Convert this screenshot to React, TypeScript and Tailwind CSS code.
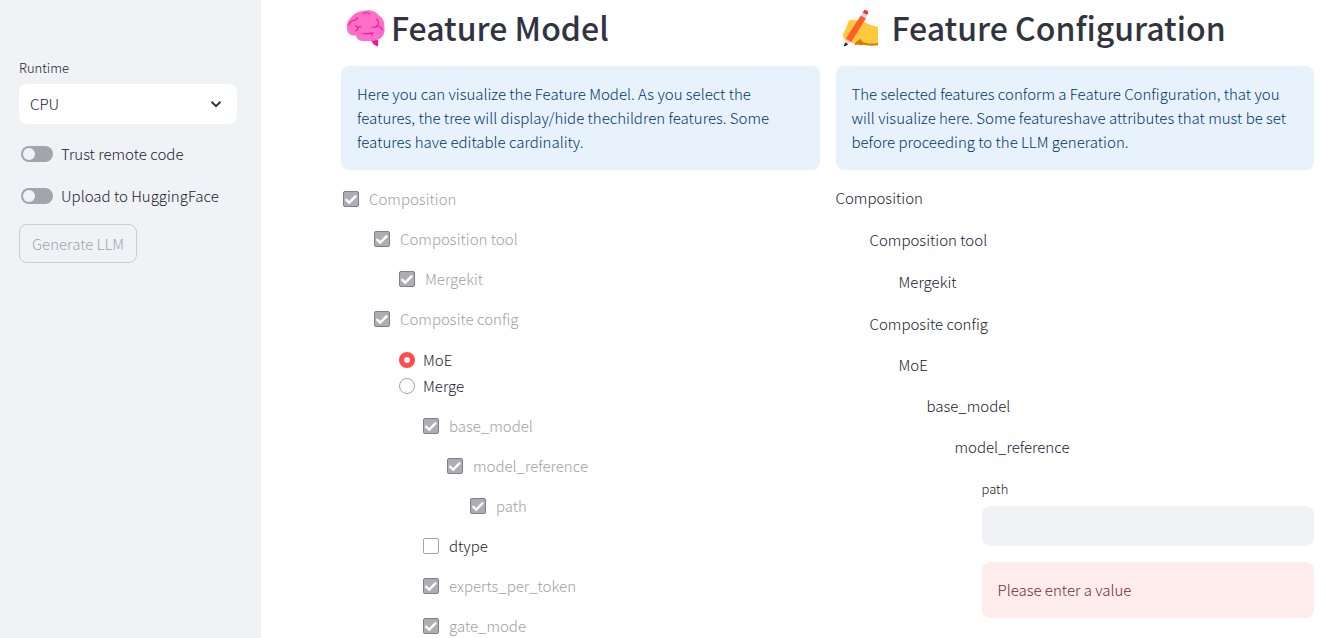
import { useState } from "react";

type Level = 0 | 1 | 2 | 3 | 4 | 5;

const treeIndent: Record<Level, string> = {
  0: "pl-0.5",
  1: "pl-[33px]",
  2: "pl-[58px]",
  3: "pl-[82px]",
  4: "pl-[106px]",
  5: "pl-[129px]",
};

function BrainIcon() {
  return (
    <svg viewBox="0 0 40 40" className="h-10 w-10 shrink-0" aria-hidden="true">
      <path d="M25 32h8v6.500c-2.600-.6-5.400-2.300-6.500-5.500z" fill="#f8129b" />
      <path
        d="M20.500 2.500C26 1.500 31 3.500 33.500 7c4 2.500 6.300 6.500 5.800 11.500 1.200 6-1.500 12.500-7.500 13.500-4 1.500-10 .8-15 1-3-.5-5.500-2.500-6-5.500C6.500 28 2.500 26 2 21 1 16.500 3 12 6 9.500 9 5.500 14.500 2.800 20.500 2.500z"
        fill="#ff6ec7"
      />
      <g fill="none" stroke="#f8129b" strokeWidth="1.100" strokeLinecap="round">
        <path d="M4 17c.5-3 3-4.500 5.500-4.800 1.500-.2 2.500-1.200 3-2.700" />
        <path d="M18.500 5.500c2-.9 4.500-.7 6 .2" />
        <path d="M31.500 11c2 1.500 3 4 1 6.500-1.500 1.500-3.500 2.200-5.500 1.500M32 18c2.500.2 4.500 1.500 5.300 4" />
        <path d="M10.500 17.500c1.500 2 3.500 2 5.200 1M13 19.500c0 1.800-1 3-2.500 3.500" />
        <path d="M18 25.500c3.500.8 6.500-.2 10.500-.8M25.500 25.200c1 .5 1.800 1.300 2 2" />
      </g>
    </svg>
  );
}

function WritingHandIcon() {
  return (
    <svg viewBox="0 0 40 40" className="h-10 w-10 shrink-0" aria-hidden="true">
      <path
        d="M6 20.500 8.500 13.500c1-1.700 2.500-2 4.500-1.500l10 1.500c4 2 9 4 15 5.500v17.500c-8 1.500-15 1-18-.5l-2.500.6-2.500-1.600-2.500.5-2.500-3-4.500.5-2.500-5c-.3-3 1.500-5 3-7z"
        fill="#ffc83d"
      />
      <path
        d="M38 35c-6 .9-12 .8-15.500-1.200L20.500 31l-3.500 2-2 2.300c-1.200 1.500.2 2.300 1.800 1.500l1.200-.6c1.500 1.300 3.500 1.400 5.500.3 4 1.300 9 1.500 14.500.8z"
        fill="#d67d00"
      />
      <path d="M20.800 7.500 26 10.300 11.200 34 6 35 6.500 29.500z" fill="#ff5e2b" />
      <path d="M22.500 5 24 2.500c.8-1.200 4.500.6 4.200 2.200L27 7.500z" fill="#f8312f" />
      <path d="M22.600 4.600 27.400 7 26 10.300 20.800 7.500z" fill="#d8d2d6" />
      <path d="M6.300 31 10.800 33.800 5 37.800z" fill="#fbd0bd" />
      <path d="M5.200 34.600 8.200 36.200 4.800 38.200c-.8.300-1-.2-.9-.8z" fill="#212121" />
    </svg>
  );
}

function FeatureCheckbox({ label, level, disabled = true }: { label: string; level: Level; disabled?: boolean }) {
  const [checked, setChecked] = useState(disabled);
  return (
    <label className={`flex h-6 items-start gap-2.5 ${treeIndent[level]}`}>
      <span className="mt-1 grid h-4 w-4 shrink-0">
        <input
          type="checkbox"
          checked={checked}
          disabled={disabled}
          onChange={(e) => setChecked(e.target.checked)}
          className="col-start-1 row-start-1 h-4 w-4 appearance-none rounded-xs border border-[#a3a4a9] bg-white checked:border-[#7f7f8a] checked:bg-[#adadb3]"
        />
        {checked && (
          <svg viewBox="0 0 16 16" className="pointer-events-none col-start-1 row-start-1 h-4 w-4" aria-hidden="true">
            <path d="M2.500 8.200 6.200 11.600 13.200 4.600" fill="none" stroke="#fff" strokeWidth="2.400" />
          </svg>
        )}
      </span>
      <span className={disabled ? "text-[#a0a0a6]" : ""}>{label}</span>
    </label>
  );
}

function VariantRadio({ label, value, onChange, selected }: { label: string; value: string; selected: string; onChange: (v: string) => void }) {
  return (
    <label className={`flex h-6 items-center gap-2 ${treeIndent[2]}`}>
      <input
        type="radio"
        name="variant"
        value={value}
        checked={selected === value}
        onChange={() => onChange(value)}
        className="h-4 w-4 shrink-0 appearance-none rounded-full border border-[#a3a4a9] bg-white checked:border-5 checked:border-[#ff4b4b] checked:bg-[#f0f2f6]"
      />
      <span>{label}</span>
    </label>
  );
}

function Toggle({ label }: { label: string }) {
  return (
    <label className="flex h-[26px] items-center gap-2 pl-0.5">
      <input
        type="checkbox"
        role="switch"
        className="flex h-4 w-8 shrink-0 appearance-none items-center rounded-full bg-[#a3a4ac] px-0.5 before:h-3 before:w-3 before:rounded-full before:bg-[#f0f2f6] checked:justify-end checked:bg-[#ff4b4b]"
      />
      <span>{label}</span>
    </label>
  );
}

export default function App() {
  const [variant, setVariant] = useState("moe");
  return (
    <div className="flex h-screen overflow-hidden bg-white font-['Noto_Sans_CJK_SC','Noto_Sans',sans-serif] text-[15px] leading-6 font-light text-[#20222e]">
      <aside className="w-[261px] shrink-0 bg-[#f0f2f6] pt-[58px] pr-6 pl-[19px]">
        <label htmlFor="runtime" className="block text-[13px] leading-5">
          Runtime
        </label>
        <div className="mt-1.5 grid items-center">
          <select
            id="runtime"
            className="col-start-1 row-start-1 h-10 w-full appearance-none rounded-lg bg-white px-[11px]"
          >
            <option>CPU</option>
            <option>GPU</option>
          </select>
          <svg viewBox="0 0 16 16" className="pointer-events-none col-start-1 row-start-1 mr-[13px] h-4 w-4 justify-self-end" aria-hidden="true">
            <path d="M3.500 5.700 8 10.200 12.500 5.700" fill="none" stroke="#31333f" strokeWidth="2" />
          </svg>
        </div>
        <div className="mt-[17px] flex flex-col items-start gap-4">
          <Toggle label="Trust remote code" />
          <Toggle label="Upload to HuggingFace" />
        </div>
        <button disabled className="mt-[15px] h-[39px] rounded-lg border border-[#cbccd2] px-3 text-[#a2a3ab]">
          Generate LLM
        </button>
      </aside>

      <main className="grid min-w-0 flex-1 grid-cols-2 gap-4 pr-3 pl-20">
        <section className="min-w-0">
          <h1 className="flex h-[66px] items-start gap-1.5 pt-2 pl-1 text-[32px] leading-[38px] font-medium text-[#31333f]">
            <BrainIcon />
            <span>Feature Model</span>
          </h1>
          <p className="rounded-lg bg-[#e8f2fc] p-4 text-[#003670]">
            Here you can visualize the Feature Model. As you select the features, the tree will display/hide thechildren
            features. Some features have editable cardinality.
          </p>
          <div className="mt-[17px] flex flex-col gap-4">
            <FeatureCheckbox label="Composition" level={0} />
            <FeatureCheckbox label="Composition tool" level={1} />
            <FeatureCheckbox label="Mergekit" level={2} />
            <FeatureCheckbox label="Composite config" level={1} />
            <div role="radiogroup" aria-label="Composite config" className="flex flex-col gap-0.5 pt-px">
              <VariantRadio label="MoE" value="moe" selected={variant} onChange={setVariant} />
              <VariantRadio label="Merge" value="merge" selected={variant} onChange={setVariant} />
            </div>
            <FeatureCheckbox label="base_model" level={3} />
            <FeatureCheckbox label="model_reference" level={4} />
            <FeatureCheckbox label="path" level={5} />
            <FeatureCheckbox label="dtype" level={3} disabled={false} />
            <FeatureCheckbox label="experts_per_token" level={3} />
            <FeatureCheckbox label="gate_mode" level={3} />
          </div>
        </section>

        <section className="min-w-0">
          <h1 className="flex h-[66px] items-start gap-3 pt-2 pl-1 text-[32px] leading-[38px] font-medium text-[#31333f]">
            <WritingHandIcon />
            <span>Feature Configuration</span>
          </h1>
          <p className="rounded-lg bg-[#e8f2fc] p-4 text-[#003670]">
            The selected features conform a Feature Configuration, that you will visualize here. Some featureshave
            attributes that must be set before proceeding to the LLM generation.
          </p>
          <div className="mt-4 flex flex-col gap-[18px]">
            <p>Composition</p>
            <p className="pl-[34px]">Composition tool</p>
            <p className="pl-[63px]">Mergekit</p>
            <div className="flex flex-col gap-[17px]">
              <p className="pl-[34px]">Composite config</p>
              <p className="pl-[63px]">MoE</p>
              <p className="pl-[91px]">base_model</p>
              <p className="pl-[119px]">model_reference</p>
            </div>
          </div>
          <div className="mt-5 pl-[146px]">
            <label htmlFor="path" className="block text-[13px] leading-5">
              path
            </label>
            <input id="path" type="text" className="mt-[7px] block h-10 w-full rounded-lg bg-[#f0f2f6] px-3" />
            <p role="alert" className="mt-4 rounded-lg bg-[#ffecec] p-4 text-[#6d2b33]">
              Please enter a value
            </p>
          </div>
        </section>
      </main>
    </div>
  );
}
